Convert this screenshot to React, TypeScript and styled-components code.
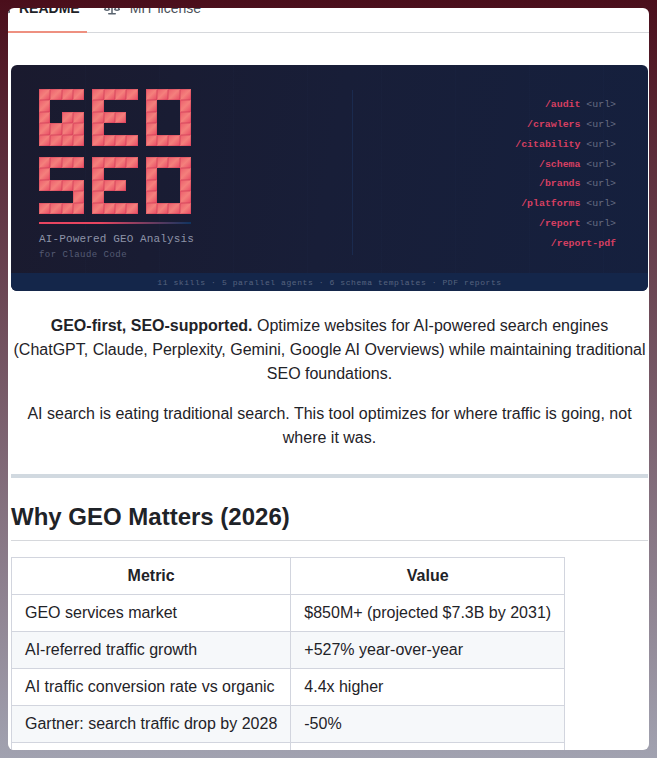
import React from "react";
import styled, { createGlobalStyle } from "styled-components";

const GlobalStyle = createGlobalStyle`
  html, body {
    margin: 0;
    padding: 0;
  }
  body {
    height: 758px;
    overflow: hidden;
    background: linear-gradient(180deg, #4a0e1b 0%, #a1a2b0 100%);
    font-family: "Liberation Sans", Arial, sans-serif;
    color: #1f2328;
  }
`;

const Page = styled.div`
  height: 758px;
  padding: 8px;
  box-sizing: border-box;
`;

const Card = styled.div`
  height: 742px;
  background: #fff;
  border-radius: 6px;
  overflow: hidden;
`;

const TabBar = styled.div`
  display: flex;
  gap: 9px;
  height: 48px;
  margin-top: -23px;
  box-sizing: border-box;
  border-bottom: 1px solid #d6d8dc;
`;

const Tab = styled.div<{ $active?: boolean }>`
  display: flex;
  align-items: center;
  gap: ${(p) => (p.$active ? "9px" : "10px")};
  height: 48px;
  padding: ${(p) => (p.$active ? "0 7px 0 8px" : "0 8px")};
  box-sizing: border-box;
  font-size: 14px;
  font-weight: ${(p) => (p.$active ? 700 : 400)};
  color: ${(p) => (p.$active ? "#1f2328" : "#4b5159")};
  border-bottom: 2px solid ${(p) => (p.$active ? "#ee9080" : "transparent")};
  &:first-child {
    margin-left: -22px;
  }
  svg {
    fill: #59636e;
    flex-shrink: 0;
  }
`;

const Readme = styled.div`
  padding: 32px 1px 0 3px;
  font-size: 16px;
  line-height: 24px;
`;

const Banner = styled.div`
  height: 226px;
  border-radius: 6px;
  overflow: hidden;
  display: flex;
  flex-direction: column;
  background: linear-gradient(100deg, #1a1a2e 0%, #181e38 50%, #15203e 100%);
  font-family: "Liberation Mono", monospace;
`;

const BannerMain = styled.div`
  flex: 1;
  display: flex;
  justify-content: space-between;
  background:
    linear-gradient(#1a2a4e, #1a2a4e) 341px 25px / 1px 165px no-repeat,
    repeating-linear-gradient(90deg, rgba(50, 80, 130, 0.03) 0 1px, transparent 1px 74px);
`;

const BrandColumn = styled.div`
  padding: 24px 0 0 28px;
  width: 152px;
`;

const LogoRow = styled.div`
  display: flex;
  gap: 8px;
  margin-bottom: 11px;
`;

const Letter = styled.div`
  display: grid;
  grid-template-columns: repeat(4, 11.33px);
  grid-auto-rows: 11.4px;
`;

const Pixel = styled.div<{ $on: boolean }>`
  background: ${(p) =>
    p.$on
      ? "linear-gradient(135deg, #ec5c6c 0%, #f4807c 50%, #e84a64 100%)"
      : "transparent"};
  box-shadow: ${(p) => (p.$on ? "inset 0 0 0 1px rgba(200, 50, 80, 0.3)" : "none")};
`;

const Rule = styled.div`
  height: 2px;
  margin-top: -3px;
  background: linear-gradient(90deg, #e94560 0%, #e94560 40%, #0f3460 100%);
`;

const Tagline = styled.div`
  margin-top: 8px;
  font-size: 11px;
  line-height: 14px;
  letter-spacing: 0.14px;
  color: #8d93a8;
  white-space: nowrap;
`;

const SubTagline = styled.div`
  margin-top: 2px;
  font-size: 9px;
  line-height: 14px;
  letter-spacing: 0.47px;
  color: #555b74;
  white-space: nowrap;
`;

const CommandList = styled.div`
  padding: 33px 32px 0 0;
  display: flex;
  flex-direction: column;
  align-items: flex-end;
  gap: 5.85px;
`;

const Command = styled.div`
  font-size: 9.9px;
  line-height: 14px;
  white-space: pre;
  font-weight: 700;
  color: #d63f62;
`;

const CommandArg = styled.span`
  font-weight: 400;
  color: #666c82;
`;

const BannerFooter = styled.div`
  height: 18px;
  background: #14264a;
  font-size: 8px;
  line-height: 20px;
  letter-spacing: 0.58px;
  text-align: center;
  color: #56637f;
  white-space: nowrap;
`;

const Paragraph = styled.p<{ $first?: boolean }>`
  margin: ${(p) => (p.$first ? "23px" : "16px")} 0 0;
  padding: 0 2px;
  text-align: center;
`;

const Divider = styled.hr`
  height: 4px;
  margin: 24px 0 0;
  padding: 0;
  border: 0;
  background: #d1d9e0;
`;

const Heading = styled.h2`
  margin: 24px 0 0;
  padding-bottom: 8px;
  font-size: 24px;
  line-height: 30px;
  font-weight: 700;
  border-bottom: 1px solid #d6d8dc;
`;

const Table = styled.table`
  margin-top: 16px;
  border-collapse: collapse;
  border-spacing: 0;
`;

const Row = styled.tr<{ $striped?: boolean }>`
  background: ${(p) => (p.$striped ? "#f6f8fa" : "#fff")};
`;

const HeadCell = styled.th`
  padding: 6px 13px;
  border: 1px solid #d2d5de;
  font-weight: 700;
  text-align: center;
`;

const Cell = styled.td`
  padding: 6px 13px;
  border: 1px solid #d2d5de;
`;

const glyphs: Record<string, string[]> = {
  G: ["1111", "1000", "1011", "1111", "1111"],
  E: ["1111", "1000", "1110", "1000", "1111"],
  O: ["1111", "1001", "1001", "1001", "1111"],
  S: ["1111", "1000", "1111", "0001", "1111"],
};

const commands = [
  { name: "/audit", arg: true },
  { name: "/crawlers", arg: true },
  { name: "/citability", arg: true },
  { name: "/schema", arg: true },
  { name: "/brands", arg: true },
  { name: "/platforms", arg: true },
  { name: "/report", arg: true },
  { name: "/report-pdf", arg: false },
];

const metrics = [
  ["GEO services market", "$850M+ (projected $7.3B by 2031)"],
  ["AI-referred traffic growth", "+527% year-over-year"],
  ["AI traffic conversion rate vs organic", "4.4x higher"],
  ["Gartner: search traffic drop by 2028", "-50%"],
  ["\u00a0", "\u00a0"],
];

const BookIcon = () => (
  <svg width="16" height="16" viewBox="0 0 16 16">
    <path d="M0 1.75A.75.75 0 0 1 .75 1h4.253c1.227 0 2.317.59 3 1.501A3.743 3.743 0 0 1 11.006 1h4.245a.75.75 0 0 1 .75.75v10.5a.75.75 0 0 1-.75.75h-4.507a2.25 2.25 0 0 0-1.591.659l-.622.621a.75.75 0 0 1-1.06 0l-.622-.621A2.25 2.25 0 0 0 5.258 13H.75a.75.75 0 0 1-.75-.75Zm7.251 10.324.004-5.073-.002-2.253A2.25 2.25 0 0 0 5.003 2.5H1.5v9h3.757a3.75 3.75 0 0 1 1.994.574ZM8.755 4.75l-.004 7.322a3.752 3.752 0 0 1 1.992-.572H14.5v-9h-3.495a2.25 2.25 0 0 0-2.25 2.25Z" />
  </svg>
);

const LawIcon = () => (
  <svg width="16" height="16" viewBox="0 0 16 16">
    <path d="M8.75.75V2h.985c.304 0 .603.08.867.231l1.29.736c.038.022.08.033.124.033h2.234a.75.75 0 0 1 0 1.5h-.427l2.111 4.692a.75.75 0 0 1-.154.838l-.53-.53.529.531-.001.002-.002.002-.006.006-.006.005-.01.01-.045.04c-.21.176-.441.327-.686.45C14.556 10.78 13.88 11 13 11a4.498 4.498 0 0 1-2.023-.454 3.544 3.544 0 0 1-.686-.45l-.045-.04-.016-.015-.006-.006-.004-.004v-.001a.75.75 0 0 1-.154-.838L12.178 4.5h-.162c-.305 0-.604-.079-.868-.231l-1.29-.736a.245.245 0 0 0-.124-.033H8.75V13h2.5a.75.75 0 0 1 0 1.5h-6.5a.75.75 0 0 1 0-1.5h2.5V3.5h-.984a.245.245 0 0 0-.124.033l-1.289.737c-.265.15-.564.23-.869.23h-.162l2.112 4.692a.75.75 0 0 1-.154.838l-.53-.53.529.531-.001.002-.002.002-.006.006-.016.015-.045.04c-.21.176-.441.327-.686.45C4.556 10.78 3.88 11 3 11a4.498 4.498 0 0 1-2.023-.454 3.544 3.544 0 0 1-.686-.45l-.045-.04-.016-.015-.006-.006-.004-.004v-.001a.75.75 0 0 1-.154-.838L2.178 4.5H1.75a.75.75 0 0 1 0-1.5h2.234a.249.249 0 0 0 .125-.033l1.288-.737c.265-.15.564-.23.869-.23h.984V.75a.75.75 0 0 1 1.5 0Zm2.945 8.477c.285.135.718.273 1.305.273s1.02-.138 1.305-.273L13 6.327Zm-10 0c.285.135.718.273 1.305.273s1.02-.138 1.305-.273L3 6.327Z" />
  </svg>
);

const Logo = ({ word }: { word: string }) => (
  <LogoRow>
    {word.split("").map((ch) => (
      <Letter key={ch}>
        {glyphs[ch].join("").split("").map((bit, i) => (
          <Pixel key={i} $on={bit === "1"} />
        ))}
      </Letter>
    ))}
  </LogoRow>
);

const App = () => (
  <Page>
    <GlobalStyle />
    <Card>
      <TabBar>
        <Tab $active>
          <BookIcon />
          README
        </Tab>
        <Tab>
          <LawIcon />
          MIT license
        </Tab>
      </TabBar>
      <Readme>
        <Banner>
          <BannerMain>
            <BrandColumn>
              <Logo word="GEO" />
              <Logo word="SEO" />
              <Rule />
              <Tagline>AI-Powered GEO Analysis</Tagline>
              <SubTagline>for Claude Code</SubTagline>
            </BrandColumn>
            <CommandList>
              {commands.map((c) => (
                <Command key={c.name}>
                  {c.name}
                  {c.arg && <CommandArg> &lt;url&gt;</CommandArg>}
                </Command>
              ))}
            </CommandList>
          </BannerMain>
          <BannerFooter>
            11 skills · 5 parallel agents · 6 schema templates · PDF reports
          </BannerFooter>
        </Banner>
        <Paragraph $first>
          <strong>GEO-first, SEO-supported.</strong> Optimize websites for
          AI-powered search engines (ChatGPT, Claude, Perplexity, Gemini, Google
          AI Overviews) while maintaining traditional SEO foundations.
        </Paragraph>
        <Paragraph>
          AI search is eating traditional search. This tool optimizes for where
          traffic is going, not where it was.
        </Paragraph>
        <Divider />
        <Heading>Why GEO Matters (2026)</Heading>
        <Table>
          <thead>
            <Row>
              <HeadCell>Metric</HeadCell>
              <HeadCell>Value</HeadCell>
            </Row>
          </thead>
          <tbody>
            {metrics.map(([metric, value], i) => (
              <Row key={i} $striped={i % 2 === 1}>
                <Cell>{metric}</Cell>
                <Cell>{value}</Cell>
              </Row>
            ))}
          </tbody>
        </Table>
      </Readme>
    </Card>
  </Page>
);

export default App;
